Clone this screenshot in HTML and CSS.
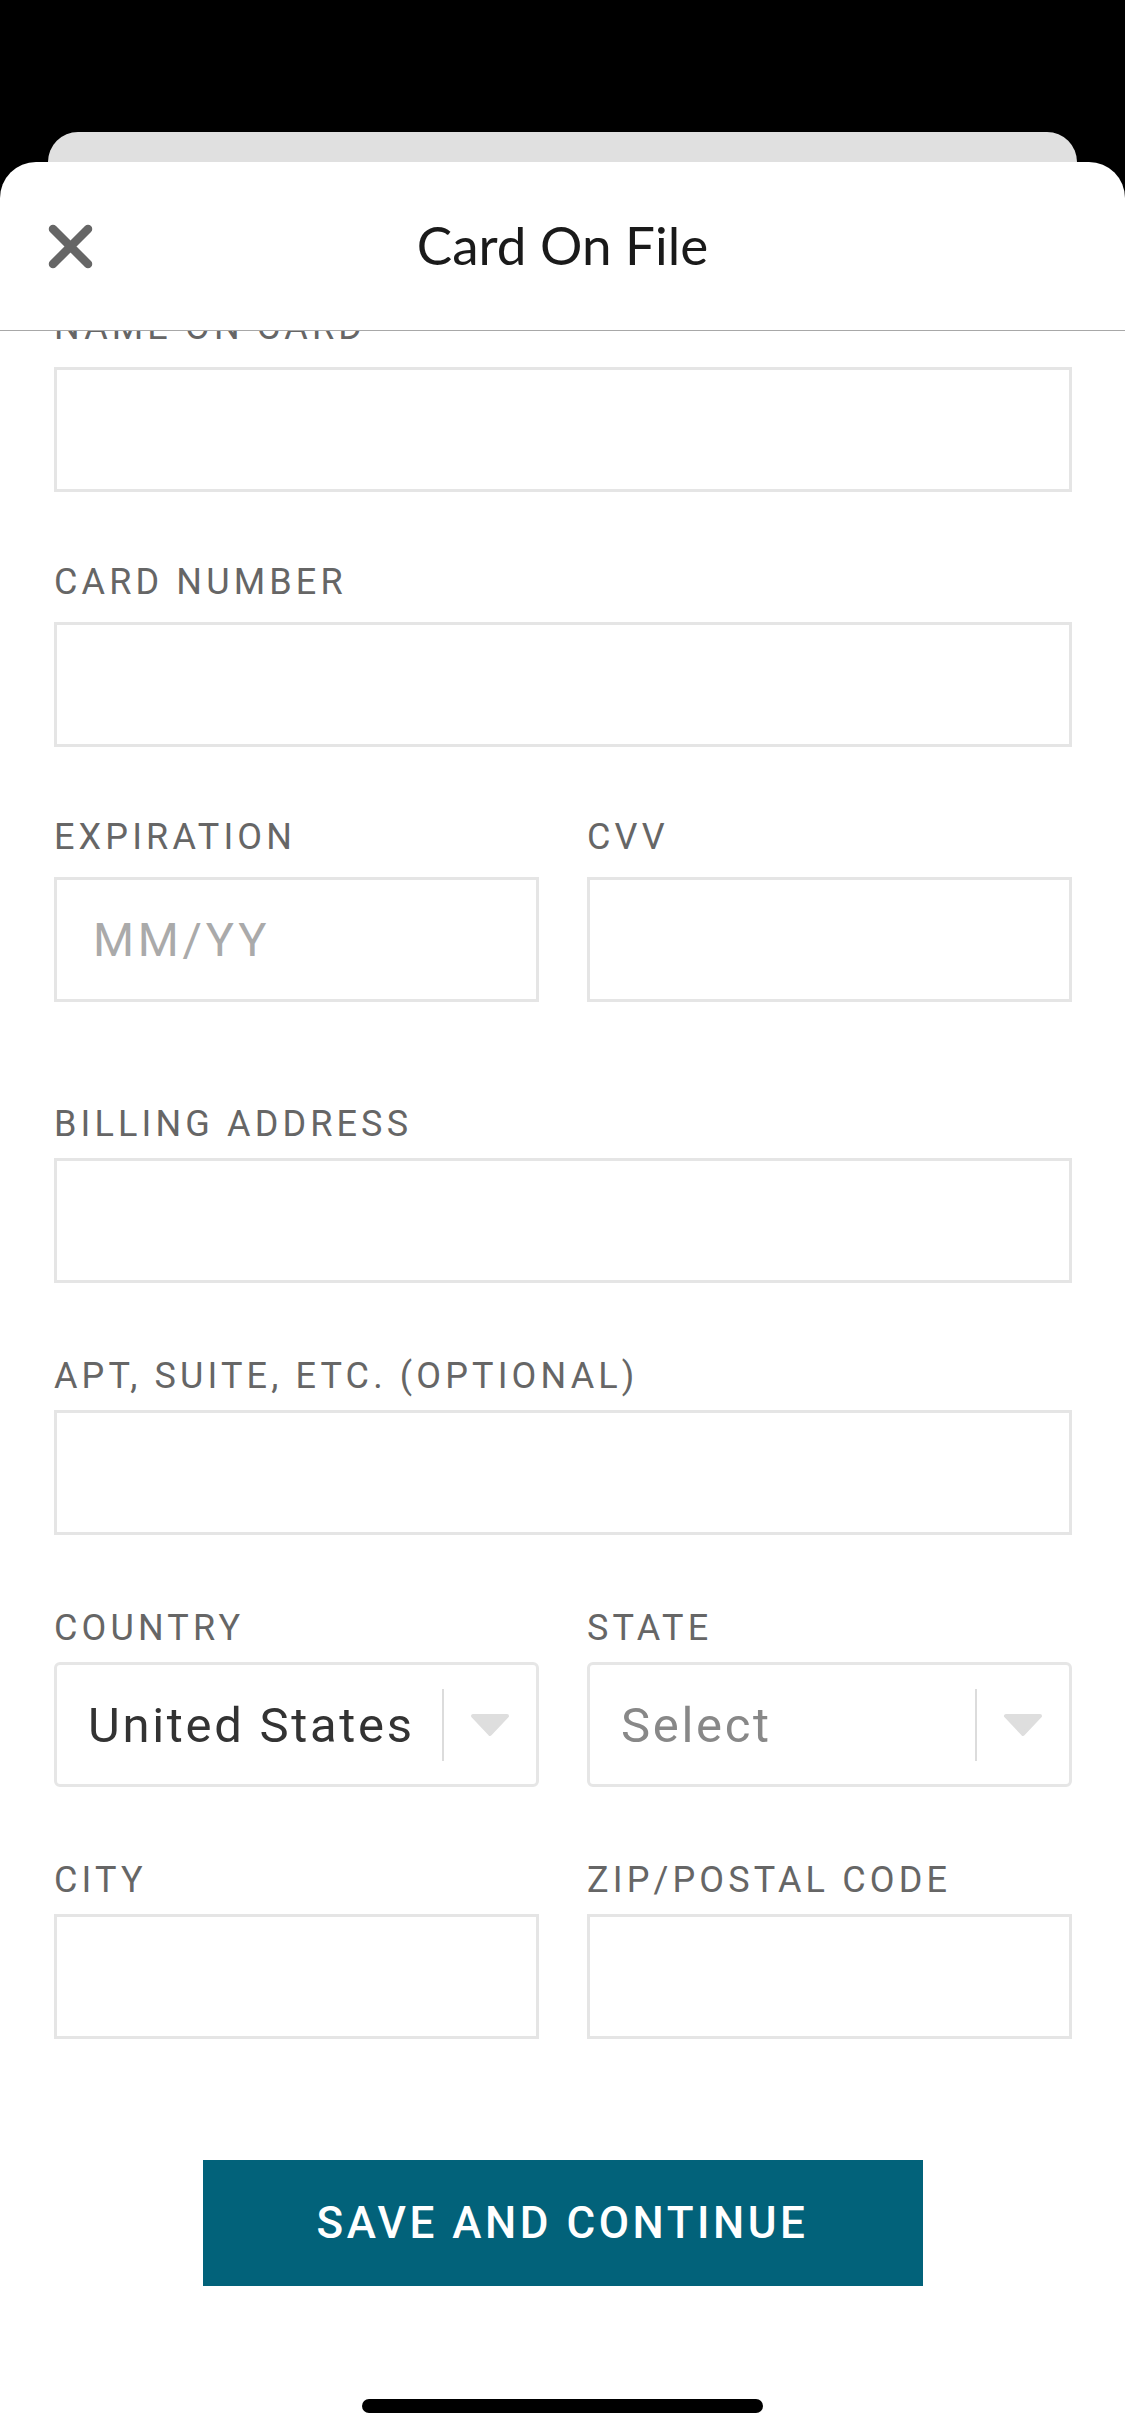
FILE: index.html
```html
<!DOCTYPE html>
<html lang="en">
<head>
<meta charset="utf-8">
<title>Card On File</title>
<link rel="stylesheet" href="styles.css">
</head>
<body>
<div class="screen">
  <div class="backcard"></div>
  <div class="sheet">
    <header class="sheet-header">
      <button class="close-btn" aria-label="Close">
        <svg width="45" height="45" viewBox="0 0 45 45">
          <path d="M5 5 L40 40 M40 5 L5 40" stroke="#666" stroke-width="8.5" stroke-linecap="round" fill="none"/>
        </svg>
      </button>
      <h1 class="sheet-title">Card On File</h1>
      <div class="header-spacer"></div>
    </header>

    <div class="scroll">
      <form class="form">
        <section class="section section-card">
          <div class="field">
            <label class="label">NAME ON CARD</label>
            <input class="input" type="text">
          </div>
          <div class="field">
            <label class="label">CARD NUMBER</label>
            <input class="input" type="text">
          </div>
          <div class="row">
            <div class="field">
              <label class="label">EXPIRATION</label>
              <input class="input" type="text" placeholder="MM/YY">
            </div>
            <div class="field">
              <label class="label">CVV</label>
              <input class="input" type="text">
            </div>
          </div>
        </section>

        <section class="section section-address">
          <div class="field">
            <label class="label">BILLING ADDRESS</label>
            <input class="input" type="text">
          </div>
          <div class="field">
            <label class="label">APT, SUITE, ETC. (OPTIONAL)</label>
            <input class="input" type="text">
          </div>
          <div class="row">
            <div class="field">
              <label class="label">COUNTRY</label>
              <div class="select">
                <span class="select-value">United States</span>
                <span class="select-divider"></span>
                <span class="select-arrow">
                  <svg width="42" height="24" viewBox="0 0 42 24"><path d="M4 3 H38 L21 21 Z" fill="#dedede" stroke="#dedede" stroke-width="4" stroke-linejoin="round"/></svg>
                </span>
              </div>
            </div>
            <div class="field">
              <label class="label">STATE</label>
              <div class="select">
                <span class="select-value placeholder">Select</span>
                <span class="select-divider"></span>
                <span class="select-arrow">
                  <svg width="42" height="24" viewBox="0 0 42 24"><path d="M4 3 H38 L21 21 Z" fill="#dedede" stroke="#dedede" stroke-width="4" stroke-linejoin="round"/></svg>
                </span>
              </div>
            </div>
          </div>
          <div class="row">
            <div class="field">
              <label class="label">CITY</label>
              <input class="input" type="text">
            </div>
            <div class="field">
              <label class="label">ZIP/POSTAL CODE</label>
              <input class="input" type="text">
            </div>
          </div>
        </section>
      </form>
    </div>

    <footer class="footer">
      <button class="primary-btn" type="button">SAVE AND CONTINUE</button>
      <div class="home-indicator"></div>
    </footer>
  </div>
</div>
</body>
</html>
```
FILE: styles.css
```css
* { box-sizing: border-box; }

html, body {
  margin: 0;
  padding: 0;
  background: #000;
}

body {
  width: 1125px;
  height: 2436px;
  overflow: hidden;
  font-family: Roboto, "Liberation Sans", sans-serif;
}

.screen {
  width: 1125px;
  height: 2436px;
  display: flex;
  flex-direction: column;
  padding-top: 132px;
}

.backcard {
  margin: 0 48px -30px 48px;
  height: 60px;
  flex: none;
  background: #e0e0e0;
  border-radius: 30px 30px 0 0;
}

.sheet {
  flex: 1;
  display: flex;
  flex-direction: column;
  background: #fff;
  border-radius: 36px 36px 0 0;
  overflow: hidden;
}

.sheet-header {
  flex: none;
  height: 169px;
  display: grid;
  grid-template-columns: 1fr auto 1fr;
  align-items: center;
  padding: 0 48px 3px 48px;
  border-bottom: 1px solid #a8a8a8;
}

.close-btn {
  justify-self: start;
  width: 45px;
  height: 45px;
  margin-top: 3px;
  padding: 0;
  border: none;
  background: none;
  display: flex;
}

.sheet-title {
  margin: 0;
  font-family: Lato, "Noto Sans", sans-serif;
  font-weight: 400;
  font-size: 53px;
  color: #1a1a1a;
  letter-spacing: 0;
}

.scroll {
  flex: 1;
  overflow: hidden;
}

.form {
  margin-top: -22px;
  padding: 0 53px 0 54px;
  display: flex;
  flex-direction: column;
}

.section {
  display: flex;
  flex-direction: column;
}

.section-card { gap: 72px; }
.section-address { gap: 75px; margin-top: 104px; }

.row {
  display: grid;
  grid-template-columns: 1fr 1fr;
  gap: 48px;
}

.field {
  display: flex;
  flex-direction: column;
}

.section-card .field { gap: 22px; }
.section-address .field { gap: 16px; }

.label {
  font-size: 36px;
  line-height: 36px;
  letter-spacing: 0.115em;
  color: #666;
  white-space: nowrap;
}

.input {
  width: 100%;
  height: 125px;
  border: 3px solid #e5e5e5;
  border-radius: 0;
  background: #fff;
  padding: 0 36px;
  font-family: Roboto, "Liberation Sans", sans-serif;
  font-size: 47px;
  letter-spacing: 0.08em;
  color: #333;
  outline: none;
  -webkit-appearance: none;
  appearance: none;
}

.input::placeholder {
  color: #aaa;
}

.select {
  height: 125px;
  border: 3px solid #e6e6e6;
  border-radius: 6px;
  display: flex;
  align-items: center;
  padding-left: 31px;
}

.select-value {
  flex: 1;
  font-size: 49px;
  letter-spacing: 0.055em;
  color: #333;
  white-space: nowrap;
  padding-top: 2px;
}

.select-value.placeholder {
  color: #888;
}

.select-divider {
  width: 2px;
  height: 72px;
  background: #dcdcdc;
  flex: none;
}

.select-arrow {
  width: 92px;
  flex: none;
  display: flex;
  justify-content: center;
  align-items: center;
}

.select-arrow svg { display: block; }

.footer {
  flex: none;
  display: flex;
  flex-direction: column;
  align-items: center;
  padding-bottom: 23px;
}

.primary-btn {
  width: 720px;
  height: 126px;
  margin-bottom: 113px;
  border: none;
  border-radius: 0;
  background: #02627a;
  color: #fff;
  font-family: Roboto, "Liberation Sans", sans-serif;
  font-weight: 500;
  font-size: 44px;
  letter-spacing: 0.08em;
}

.home-indicator {
  width: 401px;
  height: 14px;
  border-radius: 7px;
  background: #000;
}
```
